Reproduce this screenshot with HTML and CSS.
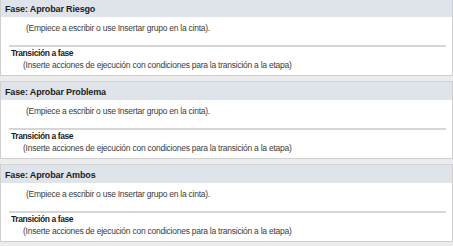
FILE: index.html
```html
<!DOCTYPE html>
<html lang="es">
  <head>
    <meta charset="UTF-8" />
    <title>Fases</title>
    <link rel="stylesheet" href="styles.css">
  </head>
  <body>
    <div class="stage-list">
      <div class="stage">
        <div class="stage-header">Fase: Aprobar Riesgo</div>
        <div class="stage-body">
          <div class="placeholder">(Empiece a escribir o use Insertar grupo en la cinta).</div>
          <div class="separator"></div>
          <div class="transition-title">Transición a fase</div>
          <div class="transition-hint">(Inserte acciones de ejecución con condiciones para la transición a la etapa)</div>
        </div>
      </div>

      <div class="stage">
        <div class="stage-header">Fase: Aprobar Problema</div>
        <div class="stage-body">
          <div class="placeholder">(Empiece a escribir o use Insertar grupo en la cinta).</div>
          <div class="separator"></div>
          <div class="transition-title">Transición a fase</div>
          <div class="transition-hint">(Inserte acciones de ejecución con condiciones para la transición a la etapa)</div>
        </div>
      </div>

      <div class="stage">
        <div class="stage-header">Fase: Aprobar Ambos</div>
        <div class="stage-body">
          <div class="placeholder">(Empiece a escribir o use Insertar grupo en la cinta).</div>
          <div class="separator"></div>
          <div class="transition-title">Transición a fase</div>
          <div class="transition-hint">(Inserte acciones de ejecución con condiciones para la transición a la etapa)</div>
        </div>
      </div>
    </div>
  </body>
</html>
```

FILE: styles.css
```css
body {
  margin: 0;
  background-color: #ececec;
  font-family: "Liberation Sans", Arial, sans-serif;
  font-size: 8.5px;
  letter-spacing: -0.25px;
  color: #3c3c3c;
  overflow: hidden;
}

.stage-list {
  margin-top: -2px; /* first header is cut off at the top */
}

.stage {
  border: 1px solid #cfcfcf;
  border-top: none;
  margin-bottom: 5px;
}

.stage-header {
  height: 18px;
  line-height: 20px;
  padding-left: 4px;
  background-color: #dfe3ea;
  border-top: 1px solid #d2d5da;
  font-weight: bold;
  font-size: 9px;
  letter-spacing: -0.15px;
  color: #1c1c1c;
}

.stage-body {
  height: 58px;
  background-color: #ffffff;
}

.placeholder {
  padding-left: 25px;
  height: 22px;
  line-height: 22px;
}

.separator {
  height: 2px;
  margin: 6px 6px 0 8px;
  background-color: #d6d6d6;
}

.transition-title {
  padding-left: 10px;
  height: 11px;
  line-height: 11px;
  margin-top: 1px;
  font-weight: bold;
  letter-spacing: -0.4px;
  color: #1c1c1c;
}

.transition-hint {
  padding-left: 22px;
  height: 12px;
  line-height: 12px;
}
```
